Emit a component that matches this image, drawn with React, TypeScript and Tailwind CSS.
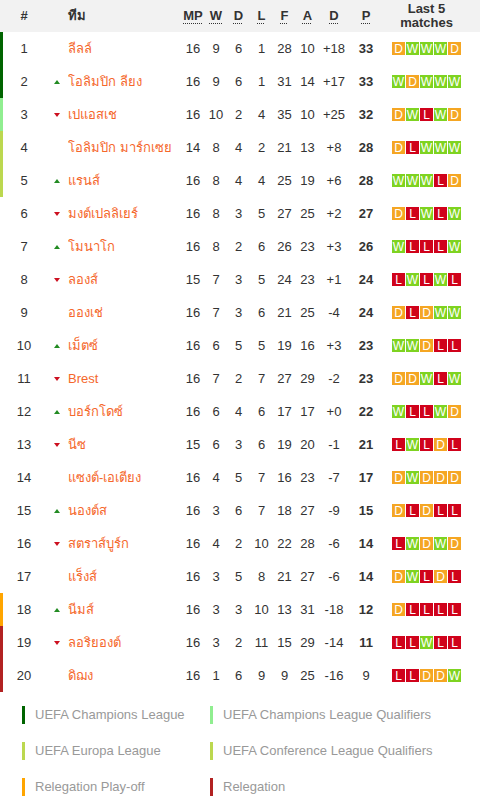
import React from "react";

type Res = "W" | "D" | "L";

interface Row {
  pos: number;
  move: "up" | "down" | null;
  team: string;
  mp: number;
  w: number;
  d: number;
  l: number;
  f: number;
  a: number;
  diff: string;
  pts: number;
  form: Res[];
  zone?: string;
}

const rows: Row[] = [
  { pos: 1, move: null, team: "ลีลล์", mp: 16, w: 9, d: 6, l: 1, f: 28, a: 10, diff: "+18", pts: 33, form: ["D", "W", "W", "W", "D"], zone: "border-l-[#006400]" },
  { pos: 2, move: "up", team: "โอลิมปิก ลียง", mp: 16, w: 9, d: 6, l: 1, f: 31, a: 14, diff: "+17", pts: 33, form: ["W", "D", "W", "W", "W"], zone: "border-l-[#006400]" },
  { pos: 3, move: "down", team: "เปแอสเช", mp: 16, w: 10, d: 2, l: 4, f: 35, a: 10, diff: "+25", pts: 32, form: ["D", "W", "L", "W", "D"], zone: "border-l-[#90ee90]" },
  { pos: 4, move: null, team: "โอลิมปิก มาร์กเซย", mp: 14, w: 8, d: 4, l: 2, f: 21, a: 13, diff: "+8", pts: 28, form: ["D", "L", "W", "W", "W"], zone: "border-l-[#bcd84f]" },
  { pos: 5, move: "up", team: "แรนส์", mp: 16, w: 8, d: 4, l: 4, f: 25, a: 19, diff: "+6", pts: 28, form: ["W", "W", "W", "L", "D"], zone: "border-l-[#bcd84f]" },
  { pos: 6, move: "down", team: "มงต์เปลลิเยร์", mp: 16, w: 8, d: 3, l: 5, f: 27, a: 25, diff: "+2", pts: 27, form: ["D", "L", "W", "L", "W"] },
  { pos: 7, move: "up", team: "โมนาโก", mp: 16, w: 8, d: 2, l: 6, f: 26, a: 23, diff: "+3", pts: 26, form: ["W", "L", "L", "L", "W"] },
  { pos: 8, move: "down", team: "ลองส์", mp: 15, w: 7, d: 3, l: 5, f: 24, a: 23, diff: "+1", pts: 24, form: ["L", "W", "L", "W", "L"] },
  { pos: 9, move: null, team: "อองเช่", mp: 16, w: 7, d: 3, l: 6, f: 21, a: 25, diff: "-4", pts: 24, form: ["D", "L", "D", "W", "W"] },
  { pos: 10, move: "up", team: "เม็ตซ์", mp: 16, w: 6, d: 5, l: 5, f: 19, a: 16, diff: "+3", pts: 23, form: ["W", "W", "D", "L", "L"] },
  { pos: 11, move: "down", team: "Brest", mp: 16, w: 7, d: 2, l: 7, f: 27, a: 29, diff: "-2", pts: 23, form: ["D", "D", "W", "L", "W"] },
  { pos: 12, move: "up", team: "บอร์กโดซ์", mp: 16, w: 6, d: 4, l: 6, f: 17, a: 17, diff: "+0", pts: 22, form: ["W", "L", "L", "W", "D"] },
  { pos: 13, move: "down", team: "นีซ", mp: 15, w: 6, d: 3, l: 6, f: 19, a: 20, diff: "-1", pts: 21, form: ["L", "W", "L", "D", "L"] },
  { pos: 14, move: null, team: "แซงต์-เอเตียง", mp: 16, w: 4, d: 5, l: 7, f: 16, a: 23, diff: "-7", pts: 17, form: ["D", "W", "D", "D", "D"] },
  { pos: 15, move: "up", team: "นองต์ส", mp: 16, w: 3, d: 6, l: 7, f: 18, a: 27, diff: "-9", pts: 15, form: ["D", "L", "D", "L", "L"] },
  { pos: 16, move: "down", team: "สตราส์บูร์ก", mp: 16, w: 4, d: 2, l: 10, f: 22, a: 28, diff: "-6", pts: 14, form: ["L", "W", "D", "W", "D"] },
  { pos: 17, move: null, team: "แร็งส์", mp: 16, w: 3, d: 5, l: 8, f: 21, a: 27, diff: "-6", pts: 14, form: ["D", "W", "L", "D", "L"] },
  { pos: 18, move: "up", team: "นีมส์", mp: 16, w: 3, d: 3, l: 10, f: 13, a: 31, diff: "-18", pts: 12, form: ["D", "L", "L", "L", "L"], zone: "border-l-[#ffa500]" },
  { pos: 19, move: "down", team: "ลอริยองต์", mp: 16, w: 3, d: 2, l: 11, f: 15, a: 29, diff: "-14", pts: 11, form: ["L", "L", "W", "L", "L"], zone: "border-l-[#b22222]" },
  { pos: 20, move: null, team: "ดิฌง", mp: 16, w: 1, d: 6, l: 9, f: 9, a: 25, diff: "-16", pts: 9, form: ["L", "L", "D", "D", "W"], zone: "border-l-[#b22222]" },
];

const badgeColor: Record<Res, string> = {
  W: "bg-[#7ed321]",
  D: "bg-[#f5a623]",
  L: "bg-[#d0021b]",
};

const legend = [
  { label: "UEFA Champions League", bar: "bg-[#006400]" },
  { label: "UEFA Champions League Qualifiers", bar: "bg-[#90ee90]" },
  { label: "UEFA Europa League", bar: "bg-[#bcd84f]" },
  { label: "UEFA Conference League Qualifiers", bar: "bg-[#bcd84f]" },
  { label: "Relegation Play-off", bar: "bg-[#ffa500]" },
  { label: "Relegation", bar: "bg-[#b22222]" },
];

const Abbr: React.FC<{ children: React.ReactNode }> = ({ children }) => (
  <span className="underline decoration-dotted decoration-1 underline-offset-[3px]">{children}</span>
);

export default function App() {
  return (
    <div className="w-[480px] bg-white text-[13px] text-[#333] font-['Liberation_Sans',Arial,sans-serif]">
      {/* Header */}
      <div className="flex h-8 items-center bg-[#f2f2f2] font-bold border-l-[3px] border-l-transparent">
        <div className="w-[42px] text-center">#</div>
        <div className="w-[23px]" />
        <div className="w-[113px]">ทีม</div>
        <div className="w-[24px] text-center"><Abbr>MP</Abbr></div>
        <div className="w-[22px] text-center"><Abbr>W</Abbr></div>
        <div className="w-[23px] text-center"><Abbr>D</Abbr></div>
        <div className="w-[23px] text-center"><Abbr>L</Abbr></div>
        <div className="w-[23px] text-center"><Abbr>F</Abbr></div>
        <div className="w-[23px] text-center"><Abbr>A</Abbr></div>
        <div className="w-[30px] text-center"><Abbr>D</Abbr></div>
        <div className="w-[34px] text-center"><Abbr>P</Abbr></div>
        <div className="w-[87px] text-center leading-[14px]">
          Last 5
          <br />
          matches
        </div>
      </div>

      {/* Rows */}
      {rows.map((r) => (
        <div
          key={r.pos}
          className={`flex h-[33px] items-center border-l-[3px] ${r.zone ?? "border-l-transparent"}`}
        >
          <div className="w-[42px] text-center">{r.pos}</div>
          <div className="flex w-[23px] justify-center pl-px">
            {r.move === "up" && (
              <span className="h-0 w-0 border-x-[3.5px] border-b-[4px] border-x-transparent border-b-[#228b22]" />
            )}
            {r.move === "down" && (
              <span className="h-0 w-0 border-x-[3.5px] border-t-[4px] border-x-transparent border-t-[#cc1020]" />
            )}
          </div>
          <div className="w-[113px] truncate text-[#f5672b]">{r.team}</div>
          <div className="w-[24px] text-center">{r.mp}</div>
          <div className="w-[22px] text-center">{r.w}</div>
          <div className="w-[23px] text-center">{r.d}</div>
          <div className="w-[23px] text-center">{r.l}</div>
          <div className="w-[23px] text-center">{r.f}</div>
          <div className="w-[23px] text-center">{r.a}</div>
          <div className="w-[30px] text-center">{r.diff}</div>
          <div className={`w-[34px] text-center ${r.pts === 9 ? "" : "font-bold"}`}>{r.pts}</div>
          <div className="flex w-[87px] justify-center gap-px">
            {r.form.map((f, i) => (
              <span
                key={i}
                className={`flex h-[13px] w-[13px] items-center justify-center text-[12px] leading-none text-white ${badgeColor[f]}`}
              >
                {f}
              </span>
            ))}
          </div>
        </div>
      ))}

      {/* Legend */}
      <div className="grid grid-cols-[188px_1fr] gap-y-[18px] pl-[22px] pt-[14px] pb-[12px] text-[#999]">
        {legend.map((l) => (
          <div key={l.label} className="flex h-[18px] items-center gap-[10px]">
            <span className={`h-[18px] w-[3px] ${l.bar}`} />
            <span>{l.label}</span>
          </div>
        ))}
      </div>
    </div>
  );
}
